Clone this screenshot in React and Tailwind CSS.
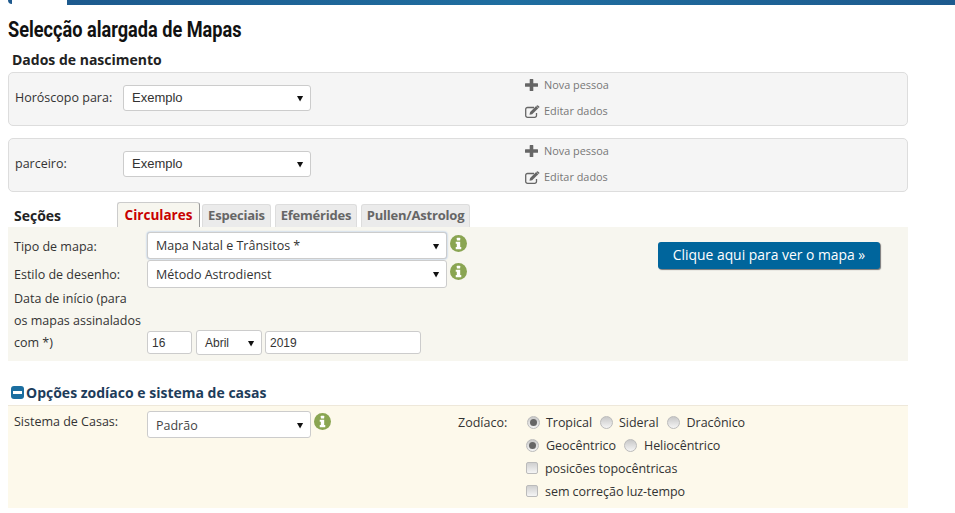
const font = { fontFamily: '"Open Sans", sans-serif' };

const InfoIcon = ({ className = "" }) => (
  <svg viewBox="0 0 16 16" className={`w-[17px] h-[17px] shrink-0 ${className}`}>
    <circle cx="8" cy="8" r="8" fill="#8aa552" />
    <rect x="6.4" y="2.6" width="3.2" height="2.6" rx="0.5" fill="#fff" />
    <path d="M5.4 6.4h4.2v5h1v1.9H5.4v-1.9h1v-3.1h-1z" fill="#fff" />
  </svg>
);

const PlusIcon = () => (
  <svg viewBox="0 0 13 12" className="w-[13px] h-[12px] mr-[6px] shrink-0">
    <path d="M4.7 0.5a.5.5 0 0 1 .5-.5h2.6a.5.5 0 0 1 .5.5v3.8h4.2a.5.5 0 0 1 .5.5v2.4a.5.5 0 0 1-.5.5H8.300v3.800a.5.5 0 0 1-.5.5H5.200a.5.5 0 0 1-.5-.5V7.700H.5a.5.5 0 0 1-.5-.5V4.800a.5.5 0 0 1 .5-.5h4.200z" fill="#666" />
  </svg>
);

const EditIcon = () => (
  <svg viewBox="0 0 16 13" className="w-[16px] h-[13px] mr-[3px] shrink-0">
    <path d="M11.500 8v2.500A1.800 1.800 0 0 1 9.700 12.300H2.500A1.800 1.800 0 0 1 .7 10.500V4.300A1.800 1.800 0 0 1 2.500 2.500H9" fill="none" stroke="#666" strokeWidth="1.300" />
    <path d="M4.500 9.800l.6-2.700 6-6 2.200 2.100-6.100 6z" fill="#666" />
    <path d="M11.900.4a.8.8 0 0 1 1.100 0l1.200 1.100a.8.8 0 0 1 0 1.100l-.5.500-2.300-2.200z" fill="#666" />
  </svg>
);

const Select = ({ value, className = "", pad = "pl-2" }) => (
  <div className={`relative bg-white border border-[#ccc] rounded-[3px] flex items-center text-[#333] ${pad} ${className}`}>
    <span>{value}</span>
    <svg viewBox="0 0 8 8" className="absolute right-[6px] top-1/2 -mt-[3px] w-[7px] h-[7px]">
      <path d="M0 1h7L3.500 7.500z" fill="#111" />
    </svg>
  </div>
);

const PersonPanel = ({ label }) => (
  <div className="w-[900px] h-[54px] bg-[#f5f5f5] border border-[#ddd] rounded-[5px] flex">
    <div className="w-[114px] pl-[6px] pt-[15px] text-[12.5px] text-[#333] leading-[20px]">{label}</div>
    <Select value="Exemplo" className="w-[188px] h-[26px] mt-[12px] text-[13px] font-['Liberation_Sans']" />
    <div className="ml-[214px] pt-[2px] text-[10.9px] text-[#777]">
      <div className="flex items-center h-[20px]">
        <PlusIcon />
        Nova pessoa
      </div>
      <div className="flex items-center h-[20px] mt-[6px]">
        <EditIcon />
        Editar dados
      </div>
    </div>
  </div>
);

const Tab = ({ children, active, className = "" }) => (
  <div
    className={`border border-b-0 rounded-t-[3px] font-bold flex items-center justify-center ${
      active
        ? "h-[25px] text-[13.5px] bg-[#f7f6ef] border-[#ccc] border-r-[#999] text-[#c80000]"
        : "h-[23px] text-[13px] tracking-[-0.2px] bg-[#ebebeb] border-[#ddd] text-[#666]"
    } ${className}`}
  >
    {children}
  </div>
);

const Radio = ({ checked, className = "" }) => (
  <span className={`w-[13px] h-[13px] -mt-[2px] rounded-full border border-[#bbb] bg-gradient-to-b from-[#c8c8c8] to-[#f5f5f5] flex items-center justify-center shrink-0 ${className}`}>
    {checked && <span className="w-[7px] h-[7px] rounded-full bg-[#666]" />}
  </span>
);

const Check = () => (
  <span className="w-[12px] h-[12px] -mt-[2px] rounded-[2px] border border-[#bbb] bg-gradient-to-b from-[#d0d0d0] to-[#f5f5f5] shrink-0" />
);

export default function App() {
  return (
    <div className="h-[513px] overflow-hidden bg-white text-[#333] text-[12.5px]" style={font}>
      <div className="flex h-[5px]">
        <div className="w-[8px]" />
        <div className="w-[59px] relative">
          <div className="absolute left-0 top-0 w-[4px] h-[4px] bg-[#1f5a8e] rounded-bl-[4px]" />
        </div>
        <div className="flex-1 bg-gradient-to-r from-[#1d5a8e] via-[#1f6ea0] to-[#1d5a8e]" />
      </div>

      <div className="pl-[8px]">
        <h1 className="mt-[13px] h-[24px] text-[22px] leading-[24px] font-bold text-[#111] font-['Roboto'] whitespace-nowrap origin-left scale-x-[0.825]">
          Selecção alargada de Mapas
        </h1>
        <h2 className="mt-[8px] ml-[4px] text-[14px] leading-[20px] font-bold text-[#222]">Dados de nascimento</h2>
        <div className="mt-[2px]">
          <PersonPanel label="Horóscopo para:" />
        </div>
        <div className="mt-[12px]">
          <PersonPanel label="parceiro:" />
        </div>

        <div className="flex items-end h-[35px] w-[900px]">
          <div className="w-[109px] pl-[6px] text-[14px] font-bold text-[#222] self-center mt-[11px]">Seções</div>
          <Tab active className="w-[83px]">Circulares</Tab>
          <Tab className="w-[69px] ml-[2px]">Especiais</Tab>
          <Tab className="w-[82px] ml-[4px]">Efemérides</Tab>
          <Tab className="w-[109px] ml-[4px]">Pullen/Astrolog</Tab>
        </div>

        <div className="w-[900px] h-[134px] bg-[#f7f6ef] flex">
          <div className="w-[650px] pl-[6px] pt-[5px]">
            <div className="flex">
              <div className="w-[133px] pt-[5px] leading-[20px]">Tipo de mapa:</div>
              <Select
                value="Mapa Natal e Trânsitos *"
                className="w-[300px] h-[27px] pt-[2px] border-[#8fb3e8] shadow-[0_0_2px_#8fb3e8]"
              />
              <InfoIcon className="ml-[3px] mt-[3px]" />
            </div>
            <div className="flex mt-[1px]">
              <div className="w-[133px] pt-[5px] leading-[20px]">Estilo de desenho:</div>
              <Select value="Método Astrodienst" className="w-[300px] h-[28px] pt-[2px]" />
              <InfoIcon className="ml-[3px] mt-[3px]" />
            </div>
            <div className="flex">
              <div className="w-[133px] leading-[22px] whitespace-nowrap">
                Data de início (para
                <br />
                os mapas assinalados
                <br />
                com *)
              </div>
              <div className="self-end flex gap-[4px] text-[12px] font-['Liberation_Sans'] -mb-[1px]">
                <div className="w-[45px] h-[23px] bg-white border border-[#ccc] rounded-[3px] pl-[4px] flex items-center">16</div>
                <Select value="Abril" className="w-[66px] h-[25px] -mt-[1px]" />
                <div className="w-[156px] h-[23px] bg-white border border-[#ccc] rounded-[3px] pl-[4px] flex items-center -ml-[1px]">2019</div>
              </div>
            </div>
          </div>
          <div className="pt-[15px]">
            <button className="w-[222px] h-[27px] bg-[#00659c] rounded-[3px] text-white text-[13.9px] shadow-[1px_1px_1px_#777]">
              Clique aqui para ver o mapa »
            </button>
          </div>
        </div>

        <h2 className="mt-[21px] h-[23px] pb-[2px] w-[900px] flex items-center pl-[3px] text-[14px] font-bold text-[#1d3c5a]">
          <span className="w-[13px] h-[13px] rounded-[3px] bg-[#1b6ea0] flex items-center justify-center mr-[2px]">
            <span className="w-[9px] h-[3px] bg-white" />
          </span>
          Opções zodíaco e sistema de casas
        </h2>

        <div className="w-[900px] h-[103px] border-t border-[#eee8da] bg-[#fdf9eb] flex">
          <div className="w-[450px] pl-[6px] pt-[5px] flex">
            <div className="w-[133px] pt-[1px] leading-[20px]">Sistema de Casas:</div>
            <Select value="Padrão" className="w-[164px] h-[27px] pt-[3px] text-[#444]" />
            <InfoIcon className="ml-[3px] mt-[2px]" />
          </div>
          <div className="pt-[7px] flex">
            <div className="w-[68px] leading-[20px]">Zodíaco:</div>
            <div className="tracking-[-0.05px]">
              <div className="flex items-center h-[20px]">
                <Radio checked className="ml-[1px] mr-[6px]" />Tropical
                <Radio className="ml-[8px] mr-[6px]" />Sideral
                <Radio className="ml-[8px] mr-[7px]" />Dracônico
              </div>
              <div className="flex items-center h-[20px] mt-[3px]">
                <Radio checked className="mr-[7px]" />Geocêntrico
                <Radio className="ml-[8px] mr-[7px]" />Heliocêntrico
              </div>
              <div className="flex items-center h-[20px] mt-[3px]">
                <Check />
                <span className="ml-[7px]">posicões topocêntricas</span>
              </div>
              <div className="flex items-center h-[20px] mt-[3px]">
                <Check />
                <span className="ml-[7px]">sem correção luz-tempo</span>
              </div>
            </div>
          </div>
        </div>
      </div>
    </div>
  );
}
